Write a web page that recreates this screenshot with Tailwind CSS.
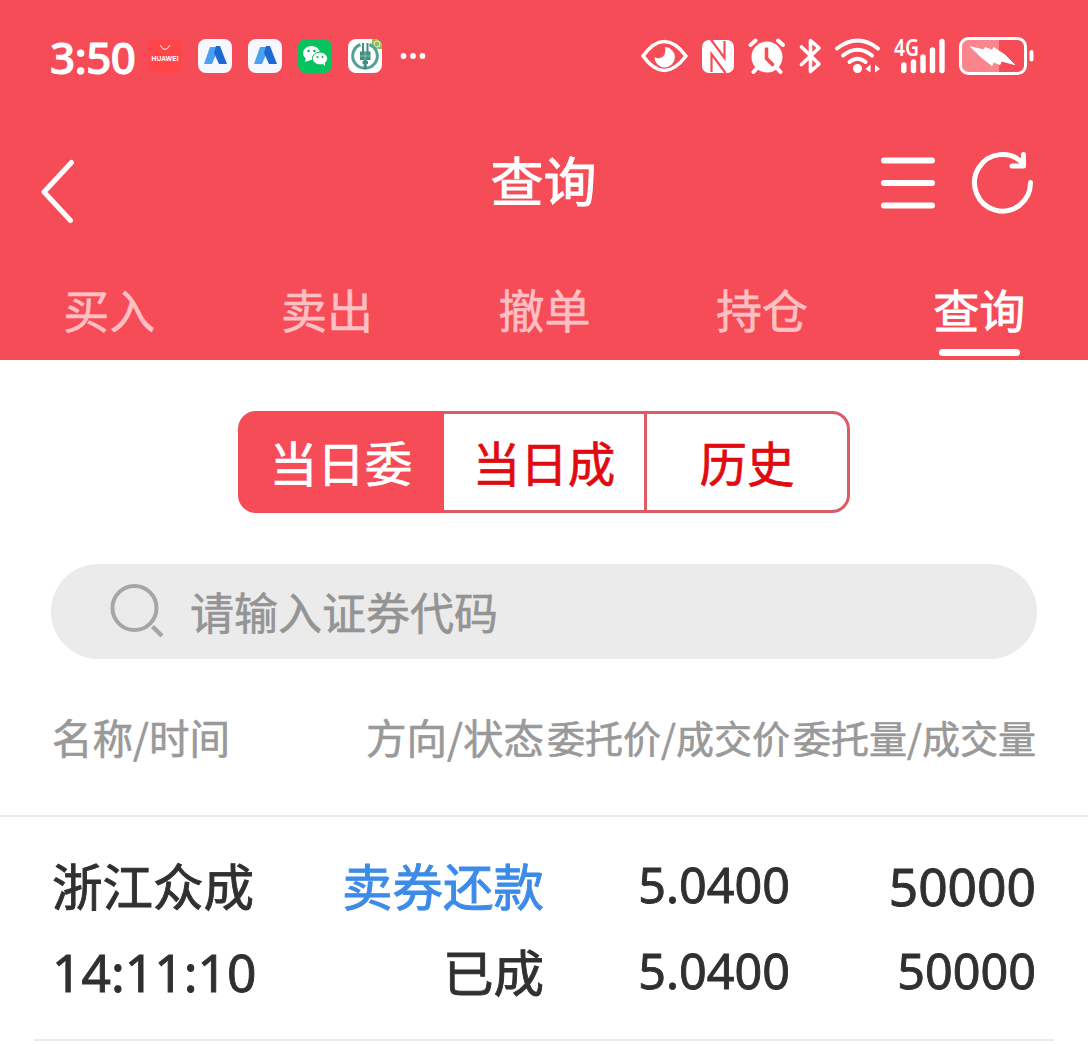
<!DOCTYPE html>
<html lang="zh-CN">
<head>
<meta charset="utf-8">
<title>查询</title>
<script src="https://cdn.jsdelivr.net/npm/@tailwindcss/browser@4"></script>
</head>
<body class="bg-white w-[1088px] h-[1044px] overflow-hidden font-['Noto_Sans_CJK_SC',sans-serif] font-normal leading-none whitespace-nowrap [-webkit-text-stroke:0.6px]">
<header class="h-[360px] bg-[#f54c57] text-white">
  <!-- status bar -->
  <div class="h-[112px] pl-[50px] pr-[53px] flex items-center justify-between">
    <div class="flex items-center">
      <span class="w-[98px] mt-px font-['Noto_Sans',sans-serif] font-medium text-[44px] leading-none tracking-[-0.5px] [-webkit-text-stroke:1px]">3:50</span>
      <svg class="w-[34px] h-[34px] mr-4" viewBox="0 0 34 34"><rect width="34" height="34" rx="8" fill="#ff4548"/><path d="M12 6q5 9 10 0" fill="none" stroke="#fff" stroke-width="1"/><text x="17" y="22" font-family="Liberation Sans" font-weight="bold" font-size="6.6" textLength="27" fill="#fff" stroke="none" text-anchor="middle" class="[-webkit-text-stroke:0]">HUAWEI</text></svg>
      <svg class="w-[34px] h-[34px] mr-4" viewBox="0 0 34 34"><rect width="34" height="34" rx="8" fill="#f5f8ff"/><path d="M12 8h9L14 25H6z" fill="#4ba0f2"/><path d="M18 7h4l7 18h-8l-5-11z" fill="#1c6ad0"/></svg>
      <svg class="w-[34px] h-[34px] mr-4" viewBox="0 0 34 34"><rect width="34" height="34" rx="8" fill="#f5f8ff"/><path d="M12 8h9L14 25H6z" fill="#4ba0f2"/><path d="M18 7h4l7 18h-8l-5-11z" fill="#1c6ad0"/></svg>
      <svg class="w-[34px] h-[34px] mr-4" viewBox="0 0 34 34"><rect width="34" height="34" rx="8" fill="#07c35f"/><path d="M7 23l1-5 5 3z" fill="#fff"/><ellipse cx="13.500" cy="14" rx="8.500" ry="7" fill="#fff"/><ellipse cx="22" cy="19.500" rx="7.600" ry="6.400" fill="#fff" stroke="#07c35f" stroke-width="1"/><path d="M24 24l3 3v-5z" fill="#fff"/><g fill="#07a850"><circle cx="10.500" cy="12" r="1.200"/><circle cx="16.500" cy="12" r="1.200"/><circle cx="19.500" cy="18" r="1"/><circle cx="24.500" cy="18" r="1"/></g></svg>
      <svg class="w-[34px] h-[34px] mr-[18px]" viewBox="0 0 34 34"><rect width="34" height="34" rx="8" fill="#fff"/><path d="M24 0h2a8 8 0 0 1 8 8v2h-4q-6-1-6-6z" fill="#8cc152"/><circle cx="29" cy="5" r="3" fill="none" stroke="#e9f5ce"/><path d="M12.500 5.500A12.300 12.300 0 1 0 21.500 5.500" fill="none" stroke="#55a293" stroke-width="3"/><path d="M15 4v9M19.500 4v9" stroke="#408f80" stroke-width="2"/><path d="M12 12.500h10.500v8.500H12z" fill="#408f80"/><path d="M17.200 20v10M14.500 23.500h5.500" stroke="#408f80" stroke-width="3"/><path d="M17.200 13v8M12 17h10" stroke="#a9d2ca" stroke-width=".7"/></svg>
      <svg class="w-7 h-2" viewBox="0 0 28 8" fill="#fff"><circle cx="3.500" cy="4" r="2.900"/><circle cx="13" cy="4" r="2.900"/><circle cx="22.500" cy="4" r="2.900"/></svg>
    </div>
    <svg class="w-[394px] h-[72px]" viewBox="641 20 394 72" fill="none" stroke="#fff" stroke-linecap="round" stroke-linejoin="round">
      <!-- eye -->
      <path d="M643 56Q664 27 686 56Q664 85 643 56z" stroke-width="3.600"/>
      <path d="M665 47a10.200 10.200 0 1 1-10.500 10q2.500 2 5.500 1q4-1 5-5q.8-3 0-6z" fill="#fff" stroke="none"/>
      <!-- nfc -->
      <rect x="702" y="40" width="32" height="33" rx="7" fill="#fff" stroke="none"/>
      <path d="M710.500 39L724.500 58V41M711.500 72V54L725.500 73" stroke="#f54c57" stroke-width="2.200" stroke-linecap="butt" stroke-linejoin="miter"/>
      <!-- alarm -->
      <circle cx="767" cy="57" r="15.500" fill="#fff" stroke="none"/>
      <path d="M750.500 45l5-4.500M783 45l-5-4.500M757 68l-3.500 4M777 68l3.500 4" stroke-width="4"/>
      <path d="M766.500 49v9.500l6 6" stroke="#f54c57" stroke-width="3.600"/>
      <!-- bluetooth -->
      <path d="M801.500 47L819 64L810.500 71.500V40.500L819 48L801.500 64.500" stroke-width="3.600"/>
      <!-- wifi -->
      <path d="M837 48.500Q857.500 32.500 878 48.500M843 55.500Q857.500 44 872 55.500M849.500 62Q857.500 55.500 865.500 62" stroke-width="3.900"/>
      <circle cx="857.500" cy="68.500" r="4.500" fill="#fff" stroke="none"/>
      <path d="M865.500 69l5-4.500v8zM880 69l-5-4.500v8z" fill="#fff" stroke="none"/>
      <!-- signal -->
      <text x="894" y="55.500" font-family="Noto Sans" font-size="23" font-weight="600" fill="#fff" stroke="none" textLength="25" lengthAdjust="spacingAndGlyphs" class="[-webkit-text-stroke:0]">4G</text>
      <path d="M903.800 65v5.500M913.500 62v8.500M923 57v13.500M932.500 50v20.500M942 41.500v29" stroke-width="5.400"/>
      <!-- battery -->
      <path d="M962 46a6 6 0 0 1 6-6h31v33h-31a6 6 0 0 1-6-6z" fill="#fa858c" stroke="none"/>
      <rect x="960.500" y="38.500" width="65" height="35" rx="8" stroke-width="3"/>
      <path d="M1031.500 52v7.500" stroke-width="4"/>
      <path d="M971 47L984.500 50L985 47.500L992.500 50.500L993.500 47.500L1005 55L1014.500 64.500L1001.500 61L1000 64.500L993.500 62L992 65.500L981 57z" fill="#fff" stroke-width="1"/>
    </svg>
  </div>
  <!-- title bar -->
  <div class="h-[142px] pl-[39px] pr-[54px] grid grid-cols-[1fr_auto_1fr] items-center">
    <svg class="w-[38px] h-[66px] mt-[18px]" viewBox="0 0 38 66" fill="none" stroke="#fff" stroke-width="5" stroke-linecap="round" stroke-linejoin="round"><path d="M32.500 3.500L5 33L31.500 61.500"/></svg>
    <h1 class="text-[53px] leading-none -mt-[8px] ml-[14px] [-webkit-text-stroke:1px]">查询</h1>
    <div class="flex justify-end items-center gap-[35px]">
      <svg class="w-[56px] h-[54px]" viewBox="880 156 56 54" fill="none" stroke="#fff" stroke-width="6" stroke-linecap="round"><path d="M884 160.500h48M884 183h48M884 205.500h48"/></svg>
      <svg class="w-[63px] h-[64px]" viewBox="971 151 63 64" fill="none" stroke="#fff" stroke-width="5" stroke-linecap="round" stroke-linejoin="round"><path d="M1030.500 182.500A28 28.300 0 1 1 1023 163.500M1023.500 154.500v11.500H1012"/></svg>
    </div>
  </div>
  <!-- tabs -->
  <nav class="h-[106px] grid grid-cols-5 text-[46px] text-[#ffbfc3] text-center">
    <span class="pt-[31px] pl-px">买入</span>
    <span class="pt-[31px] pl-px">卖出</span>
    <span class="pt-[31px] pl-px">撤单</span>
    <span class="pt-[31px] pl-px">持仓</span>
    <span class="pt-[31px] text-white flex flex-col items-center [-webkit-text-stroke:0.8px]">查询<i class="block mt-[18px] w-[81px] h-[7px] rounded-full bg-white"></i></span>
  </nav>
</header>
<main>
  <div class="mt-[51px] mx-auto w-[612px] h-[102px] grid grid-cols-[206px_203px_203px] text-[47.500px] text-[#e00b10] text-center [-webkit-text-stroke:0.7px]">
    <span class="pt-[27px] bg-[#f54c57] text-white rounded-l-[18px]">当日委</span>
    <span class="pt-[24px] border-y-[3px] border-r-[3px] border-[#dc5b67]">当日成</span>
    <span class="pt-[24px] border-y-[3px] border-r-[3px] border-[#dc5b67] rounded-r-[18px]">历史</span>
  </div>
  <div class="mt-[51px] ml-[51px] w-[986px] h-[95px] rounded-full bg-[#ebebeb] flex items-center pl-[58px] text-[44px] text-[#949494]">
    <svg class="w-[56px] h-[56px] mr-[25px] -mt-[3px]" viewBox="0 0 56 56" fill="none" stroke="#a6a6a6" stroke-width="4"><circle cx="25.500" cy="26" r="22"/><path d="M43.500 44.500L53 54" stroke-width="4.500"/></svg>
    <span class="-mt-[2px]">请输入证券代码</span>
  </div>
  <div class="h-[158px] pl-[52px] grid grid-cols-[246px_246px_246px_246px] items-center text-right text-[#999999] border-b-2 border-[#ebebeb]">
    <span class="text-left text-[40.500px]">名称/时间</span>
    <span class="text-[40.500px]">方向/状态</span>
    <span class="text-[38px] pb-px">委托价/成交价</span>
    <span class="text-[38px] pb-px">委托量/成交量</span>
  </div>
  <div class="h-[224px] mx-[34px] pl-[18px] pt-[24px] grid grid-cols-[246px_246px_246px_246px] grid-rows-[86px_86px] items-center text-right text-[#303030] text-[50.500px] border-b-2 border-[#ebebeb] [-webkit-text-stroke:0.9px]">
    <span class="text-left">浙江众成</span>
    <span class="text-[#3d8be8]">卖券还款</span>
    <span class="font-['Noto_Sans',sans-serif] text-[48.500px]">5.0400</span>
    <span class="font-['Noto_Sans',sans-serif] text-[51.500px] pt-[5px]">50000</span>
    <span class="text-left font-['Noto_Sans',sans-serif] text-[51.500px] pt-[5px]">14:11:10</span>
    <span>已成</span>
    <span class="font-['Noto_Sans',sans-serif] text-[48.500px] pt-px">5.0400</span>
    <span class="font-['Noto_Sans',sans-serif] text-[48.500px] pt-px">50000</span>
  </div>
</main>
</body>
</html>
